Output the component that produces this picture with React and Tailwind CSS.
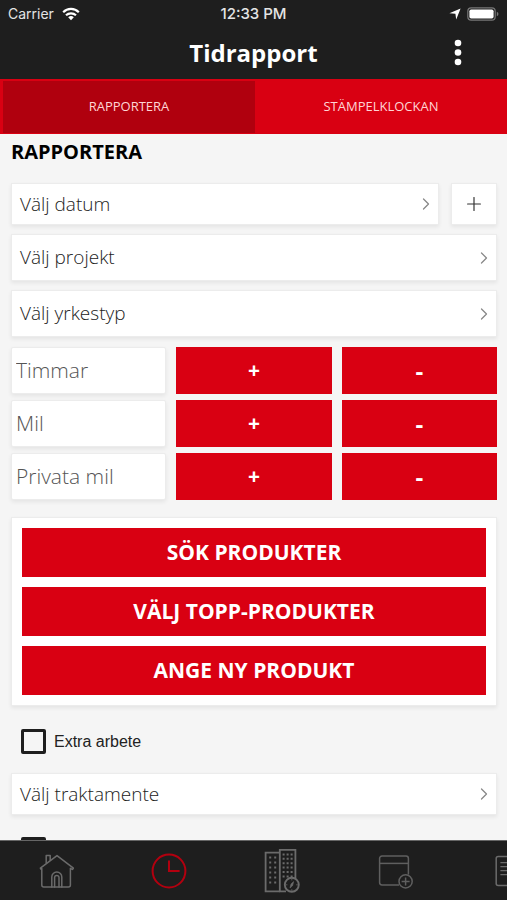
import { useState } from "react";
import { ChevronRight, Plus } from "lucide-react";

const TABS = [
  { id: "report", label: "RAPPORTERA" },
  { id: "clock", label: "STÄMPELKLOCKAN" },
];

const COUNTERS = ["Timmar", "Mil", "Privata mil"];

const PRODUCT_ACTIONS = ["SÖK PRODUKTER", "VÄLJ TOPP-PRODUKTER", "ANGE NY PRODUKT"];

const CARD = "bg-white border border-[#ececec] shadow-[0_2px_4px_rgba(0,0,0,0.07)]";

// --- ICONS ---
const WifiIcon = () => (
  <svg width="18" height="14" viewBox="0 0 18 14" fill="none" stroke="#fff" strokeWidth="2.2">
    <path d="M1.2 5.2a11 11 0 0 1 15.6 0" />
    <path d="M4 8.3a7.2 7.2 0 0 1 10 0" />
    <path d="M9 13.2 6.2 10.3a4 4 0 0 1 5.6 0z" fill="#fff" stroke="none" />
  </svg>
);

const LocationIcon = () => (
  <svg width="12" height="12" viewBox="0 0 12 12" fill="#fff">
    <path d="M11.6.4 7.2 11.6 6.4 5.8.4 5.2z" />
  </svg>
);

const BatteryIcon = () => (
  <svg width="32" height="14" viewBox="0 0 32 14" fill="none">
    <rect x="0.8" y="0.8" width="27.4" height="12.4" rx="3.4" stroke="#777" strokeWidth="1.2" />
    <rect x="2.4" y="2.4" width="24.2" height="9.2" rx="1.8" fill="#fff" />
    <path d="M29.8 4.8c1.2.5 1.6 1.2 1.6 2.2s-.4 1.7-1.6 2.2z" fill="#777" />
  </svg>
);

const DotsIcon = () => (
  <svg width="8" height="28" viewBox="0 0 8 28" fill="#fff">
    <circle cx="4" cy="4" r="3.3" />
    <circle cx="4" cy="13.5" r="3.3" />
    <circle cx="4" cy="23" r="3.3" />
  </svg>
);

const HomeIcon = () => (
  <svg width="36" height="36" viewBox="-0.8 0 36 36" fill="none" stroke="#6b6b6b" strokeWidth="1.5" strokeLinejoin="round" strokeLinecap="round">
    <path d="M1.6 15.2 18.2 2.6 34.6 15.2l-1 1.2-2-1V32a2 2 0 0 1-2 2H5a2 2 0 0 1-2-2V15.4l-1 .6z" />
    <path d="M7.4 10V2.6h4v4.6" />
    <path d="M13 34V24a5 5 0 0 1 10 0v10M15.8 34V24.6a2.2 2.2 0 0 1 4.4 0V34" />
  </svg>
);

const ClockIcon = () => (
  <svg width="36" height="36" viewBox="0 0 36 36" fill="none" stroke="#b3000f" strokeWidth="2">
    <circle cx="18" cy="18" r="16.4" />
    <path d="M18 7.4V18h10.6" />
  </svg>
);

const BuildingsIcon = () => (
  <svg width="36" height="46" viewBox="0 0 36 46" fill="none" stroke="#6b6b6b" strokeWidth="1.8">
    <path d="M15.8 43.4H1.6V4.6h14.2" />
    <path d="M22 43.4h-6.2V1.8h15.6v30" />
    <path d="M6.2 8.6v27M11.2 8.6v27" strokeWidth="2" strokeDasharray="2 3" />
    <path d="M19.6 5.4v24M23.6 5.4v24M27.6 5.4v24" strokeWidth="2" strokeDasharray="2 2.4" />
    <circle cx="27.8" cy="36.8" r="7" fill="#1e1e1e" strokeWidth="1.9" />
    <path d="m26 40 1-4 2.6-2.4-1 4z" fill="#6b6b6b" strokeWidth="0.6" />
    <path d="M27.8 30.8v1.6M27.8 41.2v1.6M21.8 36.8h1.6M32.2 36.8h1.6" strokeWidth="0.8" />
  </svg>
);

const CalendarAddIcon = () => (
  <svg width="38" height="36" viewBox="-2 0 38 36" fill="none" stroke="#5f5f5f" strokeWidth="1.5">
    <path d="M22 32H5A2.4 2.4 0 0 1 2.6 29.6V5.4A2.4 2.4 0 0 1 5 3h24A2.4 2.4 0 0 1 31.4 5.4v16" />
    <path d="M2.6 10.4h28.8" />
    <circle cx="28.6" cy="28.4" r="6.6" />
    <path d="M28.6 24.4v8M24.6 28.4h8" />
  </svg>
);

const DocumentIcon = () => (
  <svg width="24" height="34" viewBox="0 0 24 34" fill="none" stroke="#6b6b6b" strokeWidth="1.5">
    <rect x="1.2" y="2.4" width="21.6" height="29.2" rx="2" />
    <path d="M5.4 8.6h13M5.4 12.6h13M5.4 16.6h13M5.4 20.6h13" strokeWidth="1.2" />
  </svg>
);

const NAV = [
  { label: "Hem", icon: HomeIcon },
  { label: "Tidrapport", icon: ClockIcon },
  { label: "Projekt", icon: BuildingsIcon },
  { label: "Kalender", icon: CalendarAddIcon },
  { label: "Dokument", icon: DocumentIcon },
];

// --- SUB-COMPONENTS ---
const PickerRow = ({ label, className }) => (
  <button type="button" className={`${CARD} flex w-full items-center justify-between pl-2 pr-0.5 text-left text-[19px] font-light text-[#222] ${className}`}>
    {label}
    <ChevronRight size={20} strokeWidth={1.5} className="text-[#888]" />
  </button>
);

const CounterRow = ({ label }) => {
  const [value, setValue] = useState("");
  const step = (n) => setValue((prev) => String(Math.max(0, Number(prev || 0) + n)));

  return (
    <div className="grid h-[47px] grid-cols-3 gap-[10px]">
      <input
        aria-label={label}
        placeholder={label}
        value={value}
        onChange={(e) => setValue(e.target.value)}
        className={`${CARD} w-full rounded-xs px-1 text-[21px] font-light text-[#333] placeholder:text-[#555] outline-none`}
      />
      <button type="button" onClick={() => step(1)} aria-label={`Öka ${label}`} className="bg-[#d90012] text-[21px] font-bold text-white">
        +
      </button>
      <button type="button" onClick={() => step(-1)} aria-label={`Minska ${label}`} className="bg-[#d90012] text-2xl font-bold text-white">
        -
      </button>
    </div>
  );
};

const CHECKBOX = "size-[25px] shrink-0 appearance-none rounded-xs border-[3px] border-[#1e1e1e] checked:bg-[#d90012]";

export default function App() {
  const [tab, setTab] = useState("report");

  return (
    <div className="flex h-screen flex-col bg-[#f5f5f5] font-['Open_Sans',sans-serif]">
      {/* Status bar */}
      <div className="grid h-7 shrink-0 grid-cols-3 items-center bg-[#1e1e1e] px-2 font-['Inter',sans-serif] text-sm text-[#e4e4e4]">
        <span className="flex items-center gap-2">
          Carrier
          <WifiIcon />
        </span>
        <span className="text-center text-[15px] font-medium">12:33 PM</span>
        <span className="flex items-center justify-end gap-1.5">
          <LocationIcon />
          <BatteryIcon />
        </span>
      </div>

      <header className="grid h-[51px] shrink-0 grid-cols-[1fr_auto_1fr] items-center bg-[#1e1e1e] pb-0.5">
        <h1 className="col-start-2 text-2xl font-bold text-white">Tidrapport</h1>
        <button type="button" aria-label="Meny" className="mr-[37px] justify-self-end px-2">
          <DotsIcon />
        </button>
      </header>

      <div role="tablist" className="grid h-[55px] shrink-0 grid-cols-2 bg-[#d90012] pt-0.5 pb-px pl-[3px]">
        {TABS.map(({ id, label }) => (
          <button
            key={id}
            type="button"
            role="tab"
            aria-selected={tab === id}
            onClick={() => setTab(id)}
            className={`text-[13px] text-[#ffd5d5] ${tab === id ? "bg-[#b0000e]" : ""}`}
          >
            {label}
          </button>
        ))}
      </div>

      <main className="min-h-0 flex-1 overflow-y-auto pl-[11px] pr-[10px] [scrollbar-width:none]">
        <h2 className="pt-1 pb-[17px] text-xl leading-7 font-bold text-black">RAPPORTERA</h2>

        <div className="flex gap-3">
          <PickerRow label="Välj datum" className="h-[42px]" />
          <button type="button" aria-label="Lägg till datum" className={`${CARD} flex w-[46px] shrink-0 items-center justify-center text-[#333]`}>
            <Plus size={22} strokeWidth={1.3} />
          </button>
        </div>
        <div className="mt-[9px] space-y-[9px]">
          <PickerRow label="Välj projekt" className="h-[47px]" />
          <PickerRow label="Välj yrkestyp" className="h-[47px]" />
        </div>

        <div className="mt-[10px] space-y-[6px]">
          {COUNTERS.map((label) => (
            <CounterRow key={label} label={label} />
          ))}
        </div>

        <section className={`${CARD} mt-[17px] flex flex-col gap-[10px] p-[10px]`}>
          {PRODUCT_ACTIONS.map((label) => (
            <button key={label} type="button" className="h-[49px] bg-[#d90012] text-[21px] font-bold text-white">
              {label}
            </button>
          ))}
        </section>

        <label className="mt-[23px] ml-[10px] flex items-center gap-2 font-['Liberation_Sans',sans-serif] text-base text-[#222]">
          <input type="checkbox" className={CHECKBOX} />
          Extra arbete
        </label>

        <PickerRow label="Välj traktamente" className="mt-[19px] h-[42px]" />

        <label className="mt-[22px] mb-4 ml-[10px] flex items-center">
          <input type="checkbox" aria-label="Övertid" className={CHECKBOX} />
        </label>
      </main>

      {/* Bottom navigation, scrolls sideways */}
      <nav className="flex h-[60px] shrink-0 overflow-x-auto border-t border-[#666] bg-[#1e1e1e] [scrollbar-width:none]">
        {NAV.map(({ label, icon: Icon }) => (
          <button key={label} type="button" aria-label={label} className="flex w-2/9 shrink-0 items-center justify-center">
            <Icon />
          </button>
        ))}
      </nav>
    </div>
  );
}
